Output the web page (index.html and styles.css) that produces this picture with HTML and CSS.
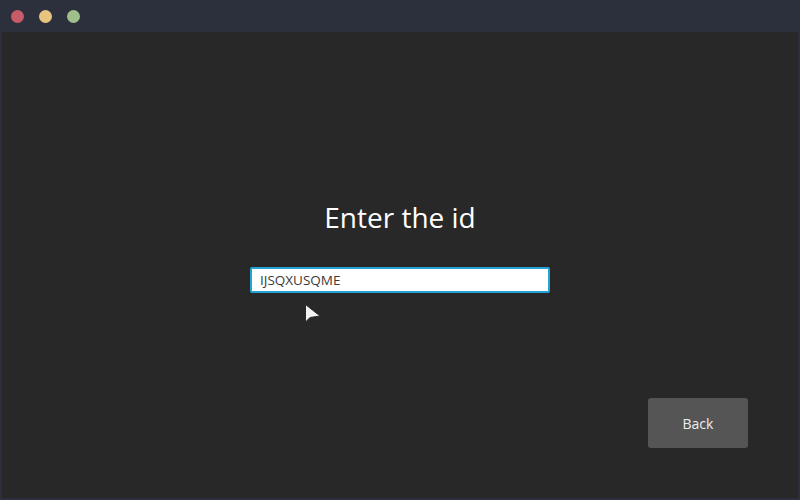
FILE: index.html
```html
<!DOCTYPE html>
<html>
<head>
<meta charset="utf-8">
<link rel="stylesheet" href="styles.css">
</head>
<body>
<div class="window">
  <div class="titlebar">
    <span class="dot red"></span>
    <span class="dot yellow"></span>
    <span class="dot green"></span>
  </div>
  <div class="content">
    <h1 class="title">Enter the id</h1>
    <div class="field">IJSQXUSQME</div>
    <button class="back">Back</button>
    <svg class="cursor" width="20" height="22" viewBox="0 0 20 22">
      <path d="M1.5 1.5 L1.5 19 L6 14.5 L16 13 Z" fill="#f2f2f2" stroke="#2a2a2a" stroke-width="1"/>
    </svg>
  </div>
</div>
</body>
</html>
```
FILE: styles.css
```css
html, body {
  margin: 0;
  padding: 0;
  width: 800px;
  height: 500px;
  overflow: hidden;
  background: #2c303c;
}
.window {
  width: 800px;
  height: 500px;
  display: flex;
  flex-direction: column;
  box-sizing: border-box;
  padding: 0 2px 2px 2px;
  background: #2c303c;
  font-family: "Open Sans", "DejaVu Sans", sans-serif;
}
.titlebar {
  height: 32px;
  flex: none;
  display: flex;
  align-items: center;
  gap: 15px;
  padding-left: 9px;
  box-sizing: border-box;
}
.dot {
  width: 13px;
  height: 13px;
  border-radius: 50%;
  display: block;
}
.red { background: #c75b68; }
.yellow { background: #e9c47f; }
.green { background: #9fc08a; }
.content {
  flex: 1;
  background: #282828;
  display: flex;
  flex-direction: column;
  align-items: center;
  position: relative;
}
.title {
  margin: 165px 0 0 0;
  font-size: 28px;
  font-weight: 400;
  color: #ffffff;
  line-height: 40px;
}
.field {
  margin-top: 30px;
  width: 300px;
  height: 26px;
  box-sizing: border-box;
  border: 2px solid #25a3d2;
  border-radius: 2px;
  background: #ffffff;
  color: #3a3a3a;
  font-size: 13.5px;
  line-height: 22px;
  padding-left: 8px;
}
.back {
  margin-top: auto;
  margin-bottom: 50px;
  margin-right: 50px;
  align-self: flex-end;
  width: 100px;
  height: 50px;
  border: none;
  border-radius: 3px;
  background: #555555;
  color: #eeeeee;
  font-family: "Open Sans", "DejaVu Sans", sans-serif;
  font-size: 14px;
}
.cursor {
  position: absolute;
  left: 302px;
  top: 271px;
}
```
